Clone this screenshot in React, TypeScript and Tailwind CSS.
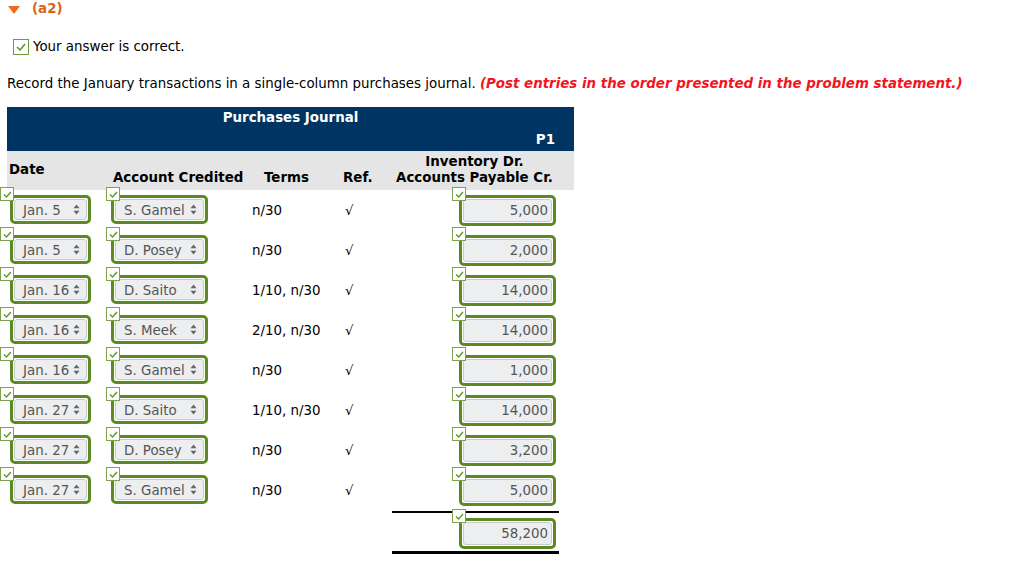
import React from "react";

const rows = [
  ["Jan. 5", "S. Gamel", "n/30", "5,000"],
  ["Jan. 5", "D. Posey", "n/30", "2,000"],
  ["Jan. 16", "D. Saito", "1/10, n/30", "14,000"],
  ["Jan. 16", "S. Meek", "2/10, n/30", "14,000"],
  ["Jan. 16", "S. Gamel", "n/30", "1,000"],
  ["Jan. 27", "D. Saito", "1/10, n/30", "14,000"],
  ["Jan. 27", "D. Posey", "n/30", "3,200"],
  ["Jan. 27", "S. Gamel", "n/30", "5,000"],
];

function Check({ className = "" }: { className?: string }) {
  return (
    <div className={`absolute w-[14px] h-[14px] bg-white border border-[#7ea34a] flex items-center justify-center ${className}`}>
      <svg width="9" height="7" viewBox="0 0 9 7">
        <path d="M1 3.5 L3.5 6 L8 1" fill="none" stroke="#5f9a2a" strokeWidth="1.4" />
      </svg>
    </div>
  );
}

function Arrows() {
  return (
    <svg width="7" height="11" viewBox="0 0 7 11" className="shrink-0">
      <path d="M3.5 0.5 L6.5 4.2 L0.5 4.2 Z" fill="#666" />
      <path d="M3.5 10.5 L6.5 6.8 L0.5 6.8 Z" fill="#666" />
    </svg>
  );
}

function SelectBox({ text, width }: { text: string; width: string }) {
  return (
    <div className={`${width} h-[29px] border-[3px] border-[#5b8a22] rounded-[5px] bg-white p-[1px]`}>
      <div className="h-full bg-[#eceef0] border border-[#c9cacc] rounded-[3px] flex items-center justify-between pl-[8px] pr-[6px] text-[#555]">
        <span className="pt-[3px]">{text}</span>
        <Arrows />
      </div>
    </div>
  );
}

function AmountBox({ text }: { text: string }) {
  return (
    <div className="w-[97px] h-[31px] border-[3px] border-[#5b8a22] rounded-[5px] bg-white p-[1px]">
      <div className="h-full bg-[#eceef0] border border-[#c9cacc] rounded-[3px] flex items-center justify-end pr-[3px] text-[#555] pt-[2px]">
        {text}
      </div>
    </div>
  );
}

export default function App() {
  return (
    <div className="w-[1024px] h-[562px] bg-white text-[13.4px] text-black overflow-hidden" style={{ fontFamily: '"DejaVu Sans", Verdana, sans-serif' }}>
      <div className="h-[17px] mt-[1px] flex items-center pl-[8px] gap-[12px]">
        <svg width="12" height="8" viewBox="0 0 12 8"><path d="M0 0 L12 0 L6 8 Z" fill="#f06a1d" /></svg>
        <span className="font-bold text-[#d8641c]">(a2)</span>
      </div>
      <div className="mt-[20px] h-[17px] flex items-center pl-[13px] gap-[4px]">
        <div className="w-[16px] h-[16px] border-[1.5px] border-[#6d9a3a] bg-white flex items-center justify-center">
          <svg width="10" height="8" viewBox="0 0 10 8"><path d="M1 4 L4 7 L9 1" fill="none" stroke="#5f9a2a" strokeWidth="1.6" /></svg>
        </div>
        <span className="pt-[1px]">Your answer is correct.</span>
      </div>
      <div className="mt-[20px] h-[16px] flex items-center pl-[7px]">
        <span className="pt-[3px]">Record the January transactions in a single-column purchases journal. <span className="font-bold italic text-[#f5141e]">(Post entries in the order presented in the problem statement.)</span></span>
      </div>
      <div className="ml-[7px] mt-[16px] w-[567px]">
        <div className="h-[44px] bg-[#003462] text-white font-bold relative">
          <div className="text-center pt-[1px]">Purchases Journal</div>
          <div className="absolute right-[19px] top-[23px]">P1</div>
        </div>
        <div className="h-[39px] bg-[#e5e5e5] flex font-bold">
          <div className="w-[98px] pl-[2px] pt-[9px]">Date</div>
          <div className="w-[140px] pl-[8px] flex items-end pb-[2px]">Account Credited</div>
          <div className="w-[85px] pl-[19px] flex items-end pb-[2px]">Terms</div>
          <div className="w-[55px] pl-[13px] flex items-end pb-[2px]">Ref.</div>
          <div className="w-[189px] flex flex-col items-center pr-[10px] leading-[16px] pt-[3px]">
            <span>Inventory Dr.</span>
            <span>Accounts Payable Cr.</span>
          </div>
        </div>
        {rows.map((r, i) => (
          <div key={i} className="h-[40px] flex">
            <div className="w-[98px] relative pt-[5px] pl-[3px]">
              <Check className="left-[-7px] top-[-3px]" />
              <SelectBox text={r[0]} width="w-[81px]" />
            </div>
            <div className="w-[140px] relative pt-[5px] pl-[6px]">
              <Check className="left-[1px] top-[-3px]" />
              <SelectBox text={r[1]} width="w-[97px]" />
            </div>
            <div className="w-[85px] pl-[7px] pt-[11px]">{r[2]}</div>
            <div className="w-[55px] pl-[15px] pt-[11px]">√</div>
            <div className="w-[189px] relative pt-[5px] pl-[74px]">
              <Check className="left-[67px] top-[-3px]" />
              <AmountBox text={r[3]} />
            </div>
          </div>
        ))}
        <div className="flex">
          <div className="w-[378px]" />
          <div className="w-[189px] pl-[7px]">
            <div className="w-[167px] border-t-2 border-black mt-[1px]" />
            <div className="relative pt-[5px] pl-[67px]">
              <Check className="left-[60px] top-[-4px]" />
              <AmountBox text="58,200" />
            </div>
            <div className="w-[167px] border-t-[3px] border-black mt-[2px]" />
          </div>
        </div>
      </div>
    </div>
  );
}
